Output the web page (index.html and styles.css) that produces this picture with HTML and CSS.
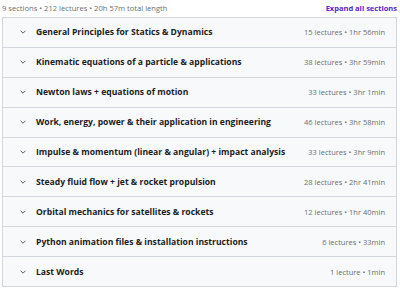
FILE: index.html
```html
<!DOCTYPE html>
<html lang="en">
<head>
    <meta charset="UTF-8">
    <title>Course content</title>
    <link rel="stylesheet" href="styles.css">
</head>
<body>
    <div class="curriculum">
        <div class="summary">
            <span class="totals">9 sections • 212 lectures • 20h 57m total length</span>
            <button class="expand-all">Expand all sections</button>
        </div>

        <div class="sections">
            <div class="section">
                <svg class="chevron" viewBox="0 0 10 6"><path d="M1 1l4 4 4-4"/></svg>
                <span class="title">General Principles for Statics &amp; Dynamics</span>
                <span class="meta">15 lectures • 1hr 56min</span>
            </div>
            <div class="section">
                <svg class="chevron" viewBox="0 0 10 6"><path d="M1 1l4 4 4-4"/></svg>
                <span class="title">Kinematic equations of a particle &amp; applications</span>
                <span class="meta">38 lectures • 3hr 59min</span>
            </div>
            <div class="section">
                <svg class="chevron" viewBox="0 0 10 6"><path d="M1 1l4 4 4-4"/></svg>
                <span class="title">Newton laws + equations of motion</span>
                <span class="meta">33 lectures • 3hr 1min</span>
            </div>
            <div class="section">
                <svg class="chevron" viewBox="0 0 10 6"><path d="M1 1l4 4 4-4"/></svg>
                <span class="title">Work, energy, power &amp; their application in engineering</span>
                <span class="meta">46 lectures • 3hr 58min</span>
            </div>
            <div class="section">
                <svg class="chevron" viewBox="0 0 10 6"><path d="M1 1l4 4 4-4"/></svg>
                <span class="title">Impulse &amp; momentum (linear &amp; angular) + impact analysis</span>
                <span class="meta">33 lectures • 3hr 9min</span>
            </div>
            <div class="section">
                <svg class="chevron" viewBox="0 0 10 6"><path d="M1 1l4 4 4-4"/></svg>
                <span class="title">Steady fluid flow + jet &amp; rocket propulsion</span>
                <span class="meta">28 lectures • 2hr 41min</span>
            </div>
            <div class="section">
                <svg class="chevron" viewBox="0 0 10 6"><path d="M1 1l4 4 4-4"/></svg>
                <span class="title">Orbital mechanics for satellites &amp; rockets</span>
                <span class="meta">12 lectures • 1hr 40min</span>
            </div>
            <div class="section">
                <svg class="chevron" viewBox="0 0 10 6"><path d="M1 1l4 4 4-4"/></svg>
                <span class="title">Python animation files &amp; installation instructions</span>
                <span class="meta">6 lectures • 33min</span>
            </div>
            <div class="section">
                <svg class="chevron" viewBox="0 0 10 6"><path d="M1 1l4 4 4-4"/></svg>
                <span class="title">Last Words</span>
                <span class="meta">1 lecture • 1min</span>
            </div>
        </div>
    </div>
</body>
</html>
```

FILE: styles.css
```css
body {
    margin: 0;
    background: #fff;
    font-family: "Open Sans", Arial, sans-serif;
    color: #2d2f31;
}
.curriculum {
    padding: 0 3px 0 2px;
}
.summary {
    display: flex;
    justify-content: space-between;
    align-items: center;
    height: 16px;
    padding-bottom: 1px;
}
.totals {
    font-size: 7.6px;
    color: #6a6f73;
}
.expand-all {
    padding: 0;
    border: none;
    background: none;
    font-family: inherit;
    font-size: 7.5px;
    font-weight: 700;
    color: #5624d0;
    cursor: pointer;
}
.sections {
    border: 1px solid #d1d7dc;
    border-bottom: none;
}
.section {
    display: flex;
    align-items: center;
    height: 28.9px;
    padding: 0 11px 0 17px;
    background: #f7f9fa;
    border-bottom: 1px solid #d1d7dc;
}
.chevron {
    width: 6px;
    height: 4px;
    margin-right: 10px;
    fill: none;
    stroke: #2d2f31;
    stroke-width: 1.3;
}
.title {
    font-size: 8.6px;
    font-weight: 700;
    color: #1c1d1f;
}
.meta {
    margin-left: auto;
    font-size: 7.5px;
    color: #6a6f73;
}
```
